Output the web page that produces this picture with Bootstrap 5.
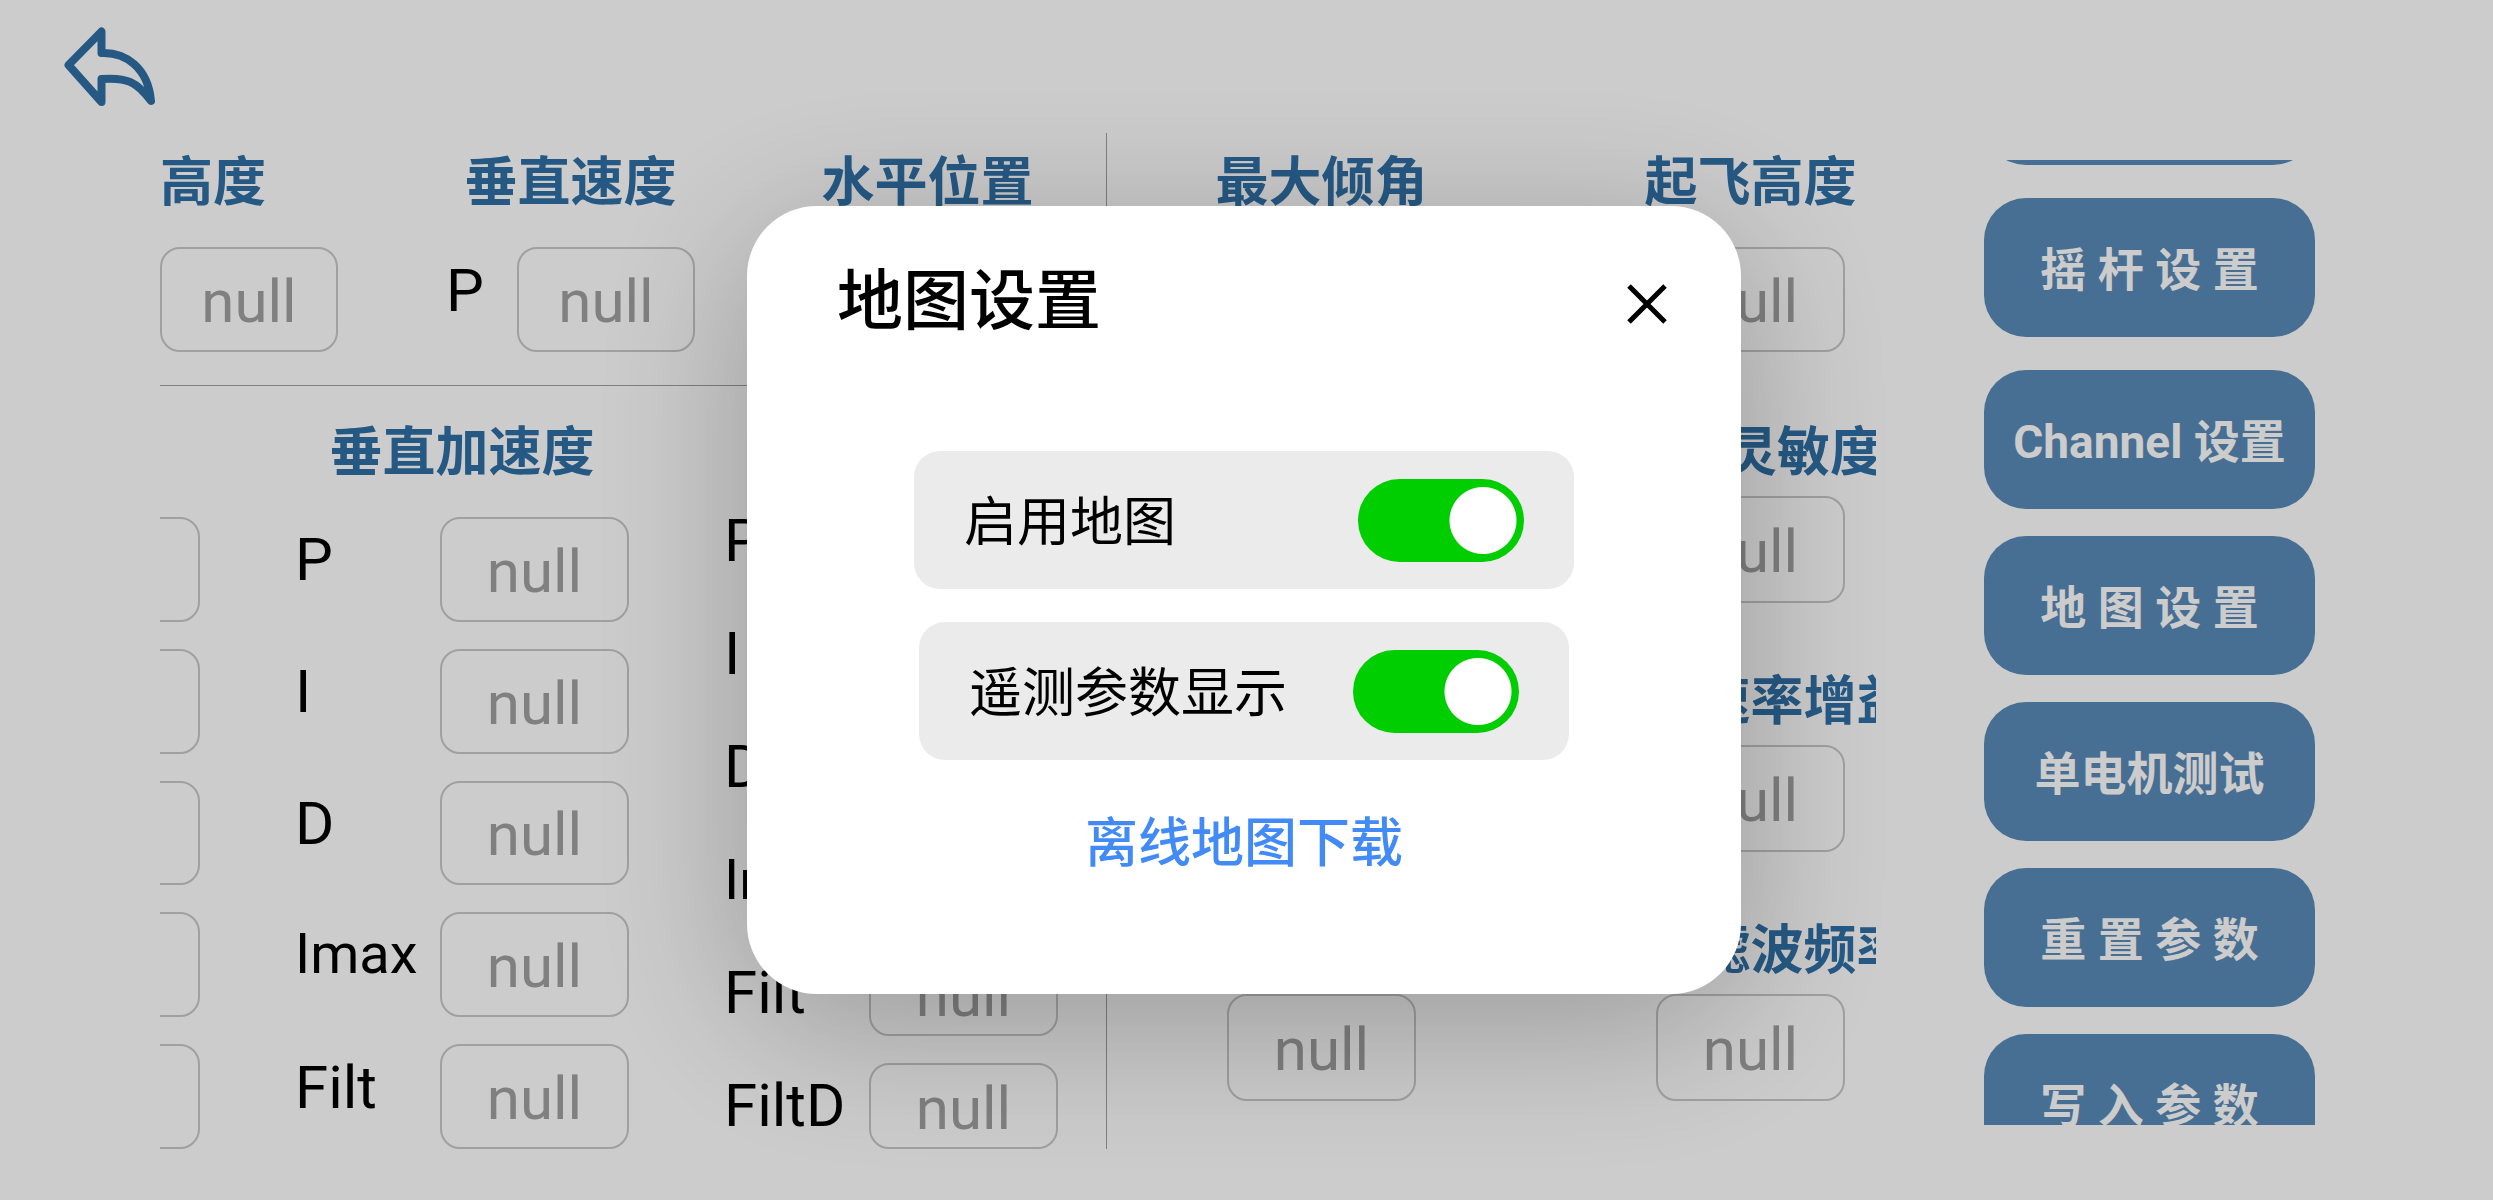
<!DOCTYPE html>
<html lang="zh-CN">
<head>
<meta charset="utf-8">
<meta name="viewport" content="width=device-width, initial-scale=1">
<title>地图设置</title>
<link rel="stylesheet" href="https://cdn.jsdelivr.net/npm/bootstrap@5.3.0/dist/css/bootstrap.min.css">
<style>
  body { font-family: Roboto, "Noto Sans CJK SC", sans-serif; color: #000; background: #fff; overflow: hidden; }
  .top-bar { height: 133px; padding: 26px 64px 0; }
  .back-btn svg { display: block; }
  .stage { padding-left: 160px; padding-right: 178px; gap: 108px; }
  .params { height: 1016px; }
  .params-left { flex: 0 0 947px; border-right: 1px solid #a0a0a0; }
  .top-params { padding-top: 7px; height: 253px; }
  .params-left .top-params { gap: 108px; padding-right: 54px; border-bottom: 1px solid #a0a0a0; }
  .pid-params { gap: 95px; padding: 24px 48px 0 0; height: 763px; }
  .top-group { width: 249px; }
  .top-group.narrow { width: 178px; }
  .pid-group { width: 334px; }
  .pid-group.narrow { width: 189px; padding-top: 107px; }
  .limit-group { width: 429px; }
  .top-group, .pid-group, .top-params .limit-group { gap: 27px; }
  .group-title { font-size: 53px; line-height: 74px; padding-top: 6px; font-weight: 700; color: #2f70a6; margin: 0; text-align: center; white-space: nowrap; }
  .top-group.narrow .group-title { text-align: left; }
  .group-title.tight { line-height: 55px; }
  .pid-group .field-line { flex: 1 1 0; min-height: 0; }
  .field-name { font-size: 60px; line-height: 60px; padding-bottom: 18px; white-space: nowrap; }
  .field-name.long { font-size: 56px; padding-bottom: 22px; }
  .six .field-name { padding-bottom: 0; }
  .value-box { width: 189px; height: 100%; font-family: inherit; font-size: 60px; line-height: 70px; text-align: center; color: #a0a0a0; background: transparent; border: 2px solid #c8c8c8; border-radius: 20px; padding: 4px 0 0; }
  .value-box:focus { outline: 2px solid #2f70a6; }
  .top-group .value-box { width: 178px; height: 105px; }
  .top-params .limit-group .value-box { height: 105px; }
  .limit-row { padding-top: 34px; }
  .limit-list { gap: 66px; }
  .limit-item { gap: 16px; }
  .limit-item .group-title { line-height: 54px; }
  .limit-item .value-box { height: 107px; }
  .side-menu { flex: 0 0 331px; height: 965px; margin-top: 27px; gap: 27px; overflow: hidden; }
  .side-btn { flex: 0 0 139px; border: 0; border-radius: 42px; background: #598ab8; color: #fff; font-size: 46px; line-height: 60px; font-weight: 700; padding: 4px 0 0; white-space: nowrap; }
  .side-btn.wide-gap { margin-bottom: 6px; }
  .side-btn.scrolled { margin-top: -134px; }
  .dim-layer { background: rgba(0,0,0,.2); padding-right: 5px; }
  .map-dialog { max-width: 994px; margin: 0 auto; min-height: 100%; }
  .map-panel { border: 0; border-radius: 70px; color: #000; box-shadow: 0 30px 160px rgba(0,0,0,.26); }
  .map-head { border: 0; padding: 48px 74px 0 90px; }
  .map-title { font-size: 66px; line-height: 96px; font-weight: 500; }
  .close-btn { padding-top: 4px; }
  .close-btn svg { display: block; }
  .map-body { padding: 101px 0 112px; }
  .option-list { gap: 33px; }
  .option-line { height: 138px; padding: 0 50px; border-radius: 26px; background: #ebebeb; font-size: 53px; line-height: 74px; gap: 66px; }
  .option-line label { padding-top: 6px; }
  .option-line.first { width: 660px; }
  .toggle { appearance: none; width: 166px; height: 83px; margin: 0; border-radius: 42px; cursor: pointer; background: #b8b8b8 radial-gradient(circle at 41px 50%, #fff 33px, transparent 34px); }
  .toggle:checked { background: #00ce00 radial-gradient(circle at 125px 50%, #fff 33px, transparent 34px); }
  .map-link { font-size: 53px; line-height: 76px; font-weight: 500; color: #428bf7; padding-top: 4px; margin-top: 42px; }
</style>
<script src="https://cdn.jsdelivr.net/npm/bootstrap@5.3.0/dist/js/bootstrap.bundle.min.js"></script>
</head>
<body>
<header class="top-bar">
  <button type="button" class="back-btn border-0 bg-transparent p-0" aria-label="返回">
    <svg width="92" height="82" viewBox="0 0 92 82" fill="none" stroke="#2f70a6" stroke-width="8" stroke-linejoin="round"><path d="M4.500 39 37.500 5.500V27C62 26 84 42 87 75C73 56 63 51 37.500 53V76Z"/></svg>
  </button>
</header>

<main class="stage d-flex">
  <div class="params d-flex flex-grow-1 overflow-hidden">
    <section class="params-left overflow-hidden">
      <div class="top-params d-flex justify-content-end">
        <div class="top-group narrow d-flex flex-column flex-shrink-0">
          <label class="group-title" for="a1">高度</label>
          <input class="value-box" id="a1" value="null">
        </div>
        <div class="top-group d-flex flex-column flex-shrink-0">
          <h2 class="group-title">垂直速度</h2>
          <div class="field-line d-flex justify-content-between align-items-center"><label class="field-name" for="a2">P</label><input class="value-box" id="a2" value="null"></div>
        </div>
        <div class="top-group d-flex flex-column flex-shrink-0">
          <h2 class="group-title">水平位置</h2>
          <div class="field-line d-flex justify-content-between align-items-center"><label class="field-name" for="a3">P</label><input class="value-box" id="a3" value="null"></div>
        </div>
      </div>
      <div class="pid-params d-flex justify-content-end">
        <div class="pid-group narrow d-flex flex-column flex-shrink-0">
          <div class="field-line"><input class="value-box" aria-label="P"></div>
          <div class="field-line"><input class="value-box" aria-label="I"></div>
          <div class="field-line"><input class="value-box" aria-label="D"></div>
          <div class="field-line"><input class="value-box" aria-label="Imax"></div>
          <div class="field-line"><input class="value-box" aria-label="Filt"></div>
        </div>
        <div class="pid-group d-flex flex-column flex-shrink-0">
          <h2 class="group-title">垂直加速度</h2>
          <div class="field-line d-flex justify-content-between align-items-center"><label class="field-name" for="c1">P</label><input class="value-box" id="c1" value="null"></div>
          <div class="field-line d-flex justify-content-between align-items-center"><label class="field-name" for="c2">I</label><input class="value-box" id="c2" value="null"></div>
          <div class="field-line d-flex justify-content-between align-items-center"><label class="field-name" for="c3">D</label><input class="value-box" id="c3" value="null"></div>
          <div class="field-line d-flex justify-content-between align-items-center"><label class="field-name long" for="c4">Imax</label><input class="value-box" id="c4" value="null"></div>
          <div class="field-line d-flex justify-content-between align-items-center"><label class="field-name" for="c5">Filt</label><input class="value-box" id="c5" value="null"></div>
        </div>
        <div class="pid-group six d-flex flex-column flex-shrink-0">
          <h2 class="group-title tight">水平速度</h2>
          <div class="field-line d-flex justify-content-between align-items-center"><label class="field-name" for="d1">P</label><input class="value-box" id="d1" value="null"></div>
          <div class="field-line d-flex justify-content-between align-items-center"><label class="field-name" for="d2">I</label><input class="value-box" id="d2" value="null"></div>
          <div class="field-line d-flex justify-content-between align-items-center"><label class="field-name" for="d3">D</label><input class="value-box" id="d3" value="null"></div>
          <div class="field-line d-flex justify-content-between align-items-center"><label class="field-name long" for="d4">Imax</label><input class="value-box" id="d4" value="null"></div>
          <div class="field-line d-flex justify-content-between align-items-center"><label class="field-name" for="d5">Filt</label><input class="value-box" id="d5" value="null"></div>
          <div class="field-line d-flex justify-content-between align-items-center"><label class="field-name" for="d6">FiltD</label><input class="value-box" id="d6" value="null"></div>
        </div>
      </div>
    </section>

    <section class="flex-grow-1 overflow-hidden">
      <div class="top-params d-flex">
        <div class="limit-group d-flex flex-column flex-shrink-0 align-items-center"><label class="group-title" for="e1">最大倾角</label><input class="value-box" id="e1" value="null"></div>
        <div class="limit-group d-flex flex-column flex-shrink-0 align-items-center"><label class="group-title" for="e2">起飞高度</label><input class="value-box" id="e2" value="null"></div>
      </div>
      <div class="limit-row d-flex">
        <div class="limit-group limit-list d-flex flex-column flex-shrink-0">
          <div class="limit-item d-flex flex-column align-items-center"><label class="group-title" for="f1">横滚灵敏度</label><input class="value-box" id="f1" value="null"></div>
          <div class="limit-item d-flex flex-column align-items-center"><label class="group-title" for="f2">速率增益</label><input class="value-box" id="f2" value="null"></div>
          <div class="limit-item d-flex flex-column align-items-center"><label class="group-title" for="f3">滤波频率</label><input class="value-box" id="f3" value="null"></div>
        </div>
        <div class="limit-group limit-list d-flex flex-column flex-shrink-0">
          <div class="limit-item d-flex flex-column align-items-center"><label class="group-title" for="g1">航向灵敏度</label><input class="value-box" id="g1" value="null"></div>
          <div class="limit-item d-flex flex-column align-items-center"><label class="group-title" for="g2">航向速率增益</label><input class="value-box" id="g2" value="null"></div>
          <div class="limit-item d-flex flex-column align-items-center"><label class="group-title" for="g3">航向滤波频率</label><input class="value-box" id="g3" value="null"></div>
        </div>
      </div>
    </section>
  </div>

  <nav class="side-menu d-flex flex-column" aria-label="设置">
    <button type="button" class="side-btn scrolled wide-gap" aria-label="基础设置"></button>
    <button type="button" class="side-btn wide-gap">摇 杆 设 置</button>
    <button type="button" class="side-btn">Channel 设置</button>
    <button type="button" class="side-btn">地 图 设 置</button>
    <button type="button" class="side-btn">单电机测试</button>
    <button type="button" class="side-btn">重 置 参 数</button>
    <button type="button" class="side-btn">写 入 参 数</button>
  </nav>
</main>

<div class="modal d-block dim-layer" role="dialog" aria-modal="true" aria-labelledby="mapTitle">
  <div class="modal-dialog modal-dialog-centered map-dialog">
    <div class="modal-content map-panel">
      <div class="modal-header map-head">
        <h1 class="modal-title map-title" id="mapTitle">地图设置</h1>
        <button type="button" class="close-btn border-0 bg-transparent px-0 pb-0" aria-label="关闭">
          <svg width="40" height="40" viewBox="0 0 40 40" stroke="#000" stroke-width="5"><path d="M2 2 38 38M38 2 2 38"/></svg>
        </button>
      </div>
      <div class="modal-body map-body d-flex flex-column align-items-center">
        <div class="option-list d-flex flex-column align-items-center">
          <div class="option-line first d-flex align-items-center justify-content-between">
            <label for="mapOn">启用地图</label>
            <input class="toggle" type="checkbox" role="switch" id="mapOn" checked>
          </div>
          <div class="option-line d-flex align-items-center justify-content-between">
            <label for="telemetryOn">遥测参数显示</label>
            <input class="toggle" type="checkbox" role="switch" id="telemetryOn" checked>
          </div>
        </div>
        <a href="#" class="map-link text-decoration-none">离线地图下载</a>
      </div>
    </div>
  </div>
</div>
</body>
</html>
